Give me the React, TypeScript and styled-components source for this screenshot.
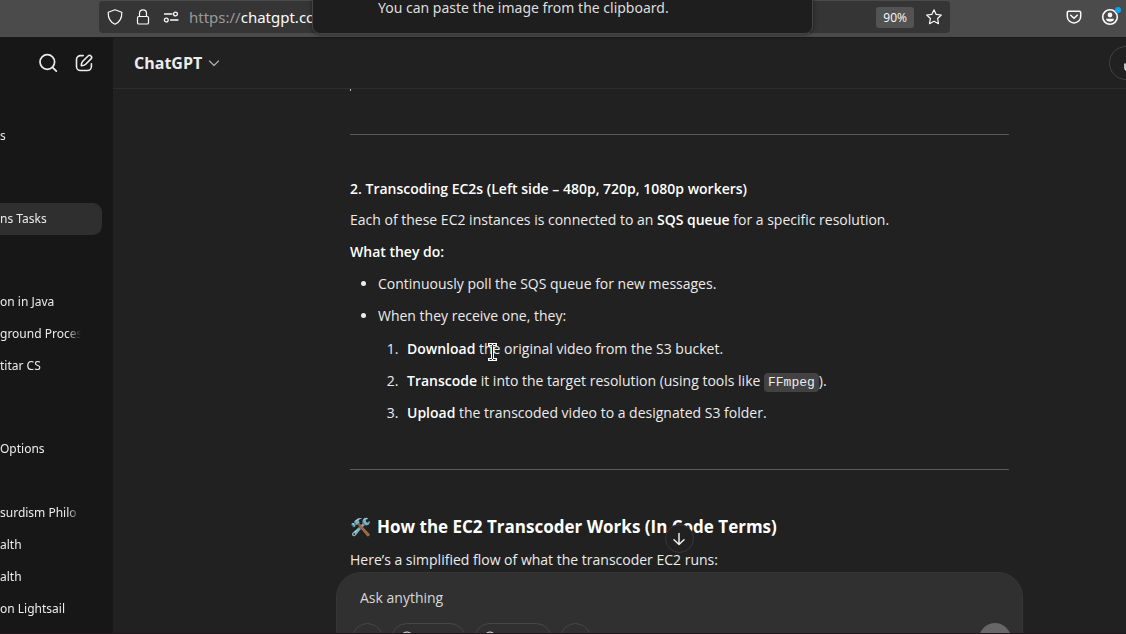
import React from 'react';
import styled, { createGlobalStyle } from 'styled-components';

const GlobalStyle = createGlobalStyle`
  * { box-sizing: border-box; }
  body {
    margin: 0;
    background: #212121;
    color: #ececec;
    font-family: "Open Sans", "Noto Sans", sans-serif;
    font-size: 14px;
    line-height: 25px;
  }
  button, input { font: inherit; color: inherit; }
  svg { display: block; flex: none; }
`;

const Screen = styled.div`
  position: relative;
  display: flex;
  flex-direction: column;
  height: 100vh;
  overflow: hidden;
`;

/* Browser toolbar */
const BrowserBar = styled.header`
  flex: none;
  display: flex;
  align-items: flex-start;
  justify-content: space-between;
  height: 37px;
  padding: 1px 5px 0 99px;
  background: #4b4b4b;
  color: #fbfbfe;
`;

const AddressBar = styled.div`
  flex: 1;
  display: flex;
  align-items: center;
  height: 32px;
  margin-right: 116px;
  padding: 0 8px;
  background: #353535;
  border-radius: 4px;
`;

const SiteIcons = styled.div`
  display: flex;
  align-items: center;
  gap: 12px;
  margin-right: 10px;
`;

const UrlField = styled.input`
  flex: 1;
  min-width: 0;
  padding: 0;
  border: 0;
  outline: 0;
  background: transparent;
  font-family: "Noto Sans", sans-serif;
  font-size: 15px;
`;

const UrlScheme = styled.label`
  color: #9a9a9a;
  font-family: "Noto Sans", sans-serif;
  font-size: 15px;
`;

const ZoomBadge = styled.button`
  height: 21px;
  margin-right: 12px;
  padding: 0 7px;
  border: 0;
  border-radius: 3px;
  background: #535353;
  font-size: 12px;
  line-height: 21px;
`;

const BarButton = styled.button`
  display: flex;
  padding: 0;
  border: 0;
  background: transparent;
`;

const BarActions = styled.div`
  display: flex;
  align-items: center;
  gap: 19px;
  height: 32px;
`;

const Popover = styled.div`
  position: absolute;
  z-index: 3;
  top: -20px;
  left: 312px;
  width: 501px;
  height: 54px;
  padding: 14px 0 0 65px;
  background: #1e1e1e;
  border: 1px solid #444;
  border-radius: 8px;
  box-shadow: 0 1px 4px rgba(0, 0, 0, 0.4);
  color: #ddd;
  font-family: "Noto Sans", sans-serif;
`;

/* Application: its right edge runs past the window */
const AppShell = styled.div`
  flex: 1;
  display: flex;
  min-height: 0;
  width: calc(100% + 120px);
  border-top: 1px solid #1a1a1a;
`;

const Sidebar = styled.nav`
  flex: none;
  width: 113px;
  overflow: hidden;
  background: #171717;
`;

const SidebarTools = styled.div`
  display: flex;
  align-items: center;
  justify-content: flex-end;
  gap: 16px;
  height: 50px;
  padding-right: 19px;
`;

const ChatGroup = styled.ul<{ $first?: boolean }>`
  margin: 0;
  padding: ${p => (p.$first ? 32 : 51)}px 11px 0 0;
  list-style: none;
`;

const ChatLink = styled.a<{ $active?: boolean }>`
  display: block;
  height: 32px;
  padding-right: 21px;
  border-radius: 0 9px 9px 0;
  background: ${p => (p.$active ? '#2f2f2f' : 'transparent')};
  color: #ececec;
  font-family: "Noto Sans", sans-serif;
  font-size: 12px;
  line-height: 31px;
  text-decoration: none;
`;

const ChatTitle = styled.span`
  display: block;
  overflow: hidden;
  white-space: pre;
  mask-image: linear-gradient(to left, transparent, #000 14px);
`;

const Main = styled.main`
  flex: 1;
  min-width: 0;
  display: flex;
  flex-direction: column;
`;

const ChatHeader = styled.div`
  flex: none;
  display: flex;
  align-items: center;
  justify-content: space-between;
  height: 51px;
  padding: 0 137px 0 21px;
  border-bottom: 1px solid #2d2d2d;
`;

const ModelButton = styled.button`
  display: flex;
  align-items: center;
  gap: 6px;
  padding: 0;
  border: 0;
  background: transparent;
  font-size: 16px;
  font-weight: 700;
`;

const ShareButton = styled.button`
  display: flex;
  align-items: center;
  flex: none;
  width: 89px;
  height: 34px;
  margin-right: -89px;
  padding: 0 14px;
  border: 1px solid #424242;
  border-radius: 17px;
  background: transparent;
`;

const Thread = styled.article`
  width: 659px;
  max-width: 100%;
  margin: 0 auto;
`;

const CutLine = styled.div`
  width: 1px;
  height: 2px;
  background: #bbb;
`;

const Rule = styled.hr<{ $gap: number }>`
  height: 1px;
  margin: ${p => p.$gap}px 0 41px;
  border: 0;
  background: #5a5a5a;
`;

const StepHeading = styled.h4`
  margin: 0 0 6px;
  font-size: 14px;
  font-weight: 600;
  color: #fff;
`;

const SectionHeading = styled.h3`
  display: flex;
  gap: 6px;
  margin: 0 0 5px;
  font-size: 17px;
  font-weight: 700;
  line-height: 32px;
  color: #fff;
`;

const Paragraph = styled.p`
  margin: 0 0 7px;
`;

const LastParagraph = styled(Paragraph)`
  margin: 0;
  line-height: 24px;
`;

const Strong = styled.strong`
  font-weight: 600;
  color: #fff;
`;

const BulletList = styled.ul`
  margin: 0;
  padding-left: 28px;
`;

const StepList = styled.ol`
  margin: 8px 0 0;
  padding-left: 24px;
`;

const Item = styled.li`
  margin-bottom: 7px;
  &::marker { color: #ececec; }
`;

const StepItem = styled(Item)`
  padding-left: 5px;
`;

const Code = styled.code`
  padding: 2px 4px;
  border-radius: 4px;
  background: #424242;
  font-family: "Liberation Mono", monospace;
  font-size: 13px;
  line-height: 20px;
`;

const ComposerDock = styled.div`
  position: relative;
  flex: none;
  width: 687px;
  max-width: 100%;
  margin: 0 auto;
`;

const ScrollButton = styled.button`
  position: absolute;
  top: -48px;
  left: calc(50% - 15px);
  display: grid;
  place-items: center;
  width: 29px;
  height: 29px;
  padding: 0;
  border: 1px solid #383838;
  border-radius: 50%;
  background: #212121;
`;

const Composer = styled.form`
  padding: 12px 11px 9px 15px;
  border: 1px solid #363636;
  border-radius: 25px;
  background: #303030;
`;

const Prompt = styled.input`
  display: block;
  width: 100%;
  height: 25px;
  margin-bottom: 13px;
  padding: 0 8px;
  border: 0;
  outline: 0;
  background: transparent;
  &::placeholder { color: #d8d8d8; opacity: 1; }
`;

const Tools = styled.div`
  display: flex;
  gap: 8px;
`;

const ToolButton = styled.button<{ $width: number }>`
  display: flex;
  align-items: center;
  gap: 5px;
  width: ${p => p.$width}px;
  height: 32px;
  padding: 0 7px;
  border: 1px solid #474747;
  border-radius: 16px;
  background: transparent;
  font-size: 12px;
`;

const SendButton = styled.button`
  width: 32px;
  height: 32px;
  margin-left: auto;
  padding: 0 8px;
  border: 0;
  border-radius: 50%;
  background: #676767;
`;

const TextCursor = styled.svg`
  position: absolute;
  z-index: 2;
  left: 488px;
  top: 343px;
`;

const ScreenEdge = styled.div`
  position: absolute;
  z-index: 4;
  right: 0;
  bottom: 0;
  left: 0;
  height: 1px;
  background: #22171d;
`;

type IconProps = { size?: number; width?: number; children: React.ReactNode; box?: number; color?: string };
const Icon = ({ size = 16, width = 1, box = 16, color = 'currentColor', children }: IconProps) => (
  <svg width={size} height={size} viewBox={`0 0 ${box} ${box}`} fill="none" stroke={color}
    strokeWidth={width} strokeLinecap="round" strokeLinejoin="round" aria-hidden="true">
    {children}
  </svg>
);

const groups: { title: string; active?: boolean }[][] = [
  [{ title: 's' }],
  [{ title: 'ns Tasks', active: true }],
  [{ title: 'on in Java' }, { title: 'ground Proces' }, { title: 'titar CS' }],
  [{ title: 'Options' }, { title: ' ' }, { title: 'surdism Philo' }, { title: 'alth' }, { title: 'alth' }, { title: 'on Lightsail' }],
];

export default function App() {
  return (
    <Screen>
      <GlobalStyle />
      <BrowserBar>
        <AddressBar>
          <SiteIcons>
            <Icon width={1.2}><path d="M8 .8 14.8 3.3C15 9 12.8 13.200 8 15.300 3.200 13.200 1 9 1.200 3.300Z" /></Icon>
            <Icon width={1.2}><rect x="2.500" y="7.500" width="11" height="7.500" rx="1.300" /><path d="M4.500 7.500V4.400a3.500 3.500 0 0 1 7 0v3.100" /></Icon>
            <Icon width={1.3}><path d="M1.500 5H9M7.500 11H15" /><circle cx="12.500" cy="5" r="1.900" /><circle cx="3.300" cy="11" r="1.900" /></Icon>
          </SiteIcons>
          <UrlScheme htmlFor="url">https://</UrlScheme>
          <UrlField id="url" defaultValue="chatgpt.com" />
          <ZoomBadge>90%</ZoomBadge>
          <BarButton aria-label="Bookmark this page">
            <Icon width={1.2}><path d="M8 .8 10.200 5.400 15.300 6 11.600 9.500 12.500 14.700 8 12.200 3.500 14.700 4.400 9.500.7 6 5.800 5.400Z" /></Icon>
          </BarButton>
        </AddressBar>
        <BarActions>
          <BarButton aria-label="Save to Pocket">
            <Icon width={1.5}><path d="M2.500 2.300h11a1.200 1.200 0 0 1 1.200 1.200V7.500a6.700 6.400 0 0 1-13.400 0V3.500a1.200 1.200 0 0 1 1.200-1.200ZM4.700 6.200 8 9.300l3.300-3.100" /></Icon>
          </BarButton>
          <BarButton aria-label="Account">
            <Icon size={20} box={20} width={1.600}>
              <circle cx="9" cy="10" r="7.300" />
              <circle cx="9" cy="8" r="2.400" fill="currentColor" stroke="none" />
              <path d="M5 11.800h8c0 2-1.800 3-4 3s-4-1-4-3Z" fill="currentColor" stroke="none" />
              <circle cx="17" cy="3" r="3" fill="#00a8f5" stroke="none" />
            </Icon>
          </BarButton>
        </BarActions>
      </BrowserBar>
      <Popover role="status">You can paste the image from the clipboard.</Popover>

      <AppShell>
        <Sidebar>
          <SidebarTools>
            <BarButton aria-label="Search chats">
              <Icon size={20} box={20} width={1.700}><circle cx="9.300" cy="9" r="7.300" /><path d="m14.600 14.400 3.700 3.700" /></Icon>
            </BarButton>
            <BarButton aria-label="New chat">
              <Icon size={20} box={20} width={1.600}>
                <path d="M9.200 2.600H6.500A4 4 0 0 0 2.500 6.600v6.900a4 4 0 0 0 4 4h6.900a4 4 0 0 0 4-4v-2.700" />
                <path d="M7.300 12.700c0-2 .3-3.200 1.500-4.400l5.300-5.300a2 2 0 0 1 2.900 2.900l-5.300 5.300c-1.200 1.200-2.400 1.500-4.400 1.500Z" />
              </Icon>
            </BarButton>
          </SidebarTools>
          {groups.map((group, g) => (
            <ChatGroup key={g} $first={g === 0}>
              {group.map((chat, i) => (
                <li key={i}>
                  <ChatLink href="#" $active={chat.active}><ChatTitle>{chat.title}</ChatTitle></ChatLink>
                </li>
              ))}
            </ChatGroup>
          ))}
        </Sidebar>

        <Main>
          <ChatHeader>
            <ModelButton>
              ChatGPT
              <Icon size={12} box={12} width={1.300} color="#a8a8a8"><path d="m1.500 4 4.500 4.500L10.500 4" /></Icon>
            </ModelButton>
            <ShareButton aria-label="Share">
              <Icon width={1.600}><path d="M1 9v4a2 2 0 0 0 2 2h10a2 2 0 0 0 2-2V9M8 10V1M4.500 4.500 8 1l3.500 3.500" /></Icon>
            </ShareButton>
          </ChatHeader>

          <Thread>
            <CutLine />
            <Rule $gap={43} />
            <StepHeading>2. Transcoding EC2s (Left side – 480p, 720p, 1080p workers)</StepHeading>
            <Paragraph>Each of these EC2 instances is connected to an <Strong>SQS queue</Strong> for a specific resolution.</Paragraph>
            <Paragraph><Strong>What they do:</Strong></Paragraph>
            <BulletList>
              <Item>Continuously poll the SQS queue for new messages.</Item>
              <Item>
                When they receive one, they:
                <StepList>
                  <StepItem><Strong>Download</Strong> the original video from the S3 bucket.</StepItem>
                  <StepItem><Strong>Transcode</Strong> it into the target resolution (using tools like <Code>FFmpeg</Code>).</StepItem>
                  <StepItem><Strong>Upload</Strong> the transcoded video to a designated S3 folder.</StepItem>
                </StepList>
              </Item>
            </BulletList>
            <Rule $gap={44} />
            <SectionHeading><span>🛠️</span><span>How the EC2 Transcoder Works (In Code Terms)</span></SectionHeading>
            <LastParagraph>Here’s a simplified flow of what the transcoder EC2 runs:</LastParagraph>
          </Thread>

          <ComposerDock>
            <ScrollButton aria-label="Scroll to bottom">
              <Icon size={14} box={14} width={1.500}><path d="M7 1.500v11M2 7.700l5 4.800 5-4.800" /></Icon>
            </ScrollButton>
            <Composer>
              <Prompt aria-label="Message" placeholder="Ask anything" />
              <Tools>
                <ToolButton type="button" $width={31} aria-label="Attach"><Icon size={14}><path d="M8 3v10M3 8h10" /></Icon></ToolButton>
                <ToolButton type="button" $width={75} aria-label="Search"><Icon><circle cx="8" cy="8" r="7" /></Icon></ToolButton>
                <ToolButton type="button" $width={78} aria-label="Reason"><Icon><circle cx="8" cy="7" r="6" /></Icon></ToolButton>
                <ToolButton type="button" $width={31} aria-label="More" />
                <SendButton type="button" aria-label="Send" />
              </Tools>
            </Composer>
          </ComposerDock>
        </Main>
      </AppShell>

      <TextCursor width="9" height="18" viewBox="0 0 9 18" aria-hidden="true">
        <path d="M1.500 1.500H3.500L4.500 2.500 5.500 1.500H7.500M4.500 2.500V15.500M1.500 16.500H3.500L4.500 15.500 5.500 16.500H7.500" fill="none" stroke="#fff" strokeWidth="3" strokeLinecap="square" />
        <path d="M1.500 1.500H3.500L4.500 2.500 5.500 1.500H7.500M4.500 2.500V15.500M1.500 16.500H3.500L4.500 15.500 5.500 16.500H7.500" fill="none" stroke="#111" strokeWidth="1" />
      </TextCursor>
      <ScreenEdge />
    </Screen>
  );
}
